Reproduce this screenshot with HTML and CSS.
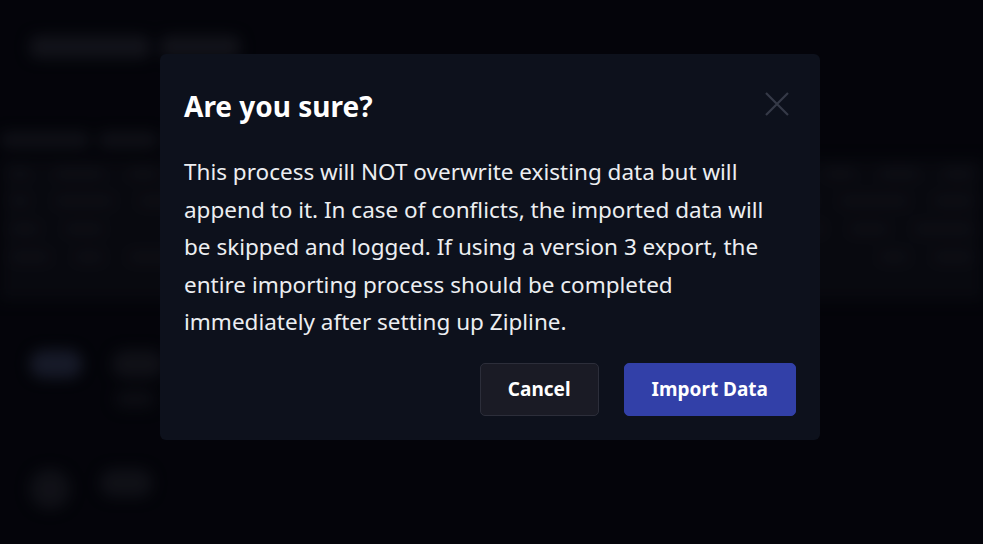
FILE: index.html
```html
<!DOCTYPE html>
<html lang="en">
<head>
<meta charset="utf-8">
<title>Import Data</title>
<link rel="stylesheet" href="styles.css">
</head>
<body>
<div class="page">
  <div class="bg">
    <div class="bg-title"><span class="blob w120"></span><span class="blob w80"></span></div>
    <div class="bg-sub"><span class="blob w90"></span><span class="blob w60"></span><span class="blob w120"></span></div>
    <div class="bg-table">
      <div class="bg-row"><span class="dot w20"></span><span class="dot w50"></span><span class="dot w30"></span><span class="spacer"></span><span class="dot w30"></span><span class="dot w40"></span><span class="dot w30"></span></div>
      <div class="bg-row"><span class="dot w20"></span><span class="dot w60"></span><span class="dot w40"></span><span class="spacer"></span><span class="dot w20"></span><span class="dot w70"></span><span class="dot w40"></span></div>
      <div class="bg-row"><span class="dot w30"></span><span class="dot w40"></span><span class="spacer"></span><span class="dot w20"></span><span class="dot w40"></span><span class="dot w60"></span></div>
      <div class="bg-row"><span class="dot w40"></span><span class="dot w30"></span><span class="dot w50"></span><span class="spacer"></span><span class="dot w30"></span><span class="dot w40"></span></div>
    </div>
    <div class="bg-pills"><span class="pill blue"></span><span class="pill"></span></div>
    <div class="bg-line"><span class="pill small"></span></div>
    <div class="bg-pills last"><span class="pill round"></span><span class="pill"></span></div>
  </div>
  <div class="overlay">
    <div class="modal" role="dialog">
      <div class="modal-header">
        <h2 class="modal-title">Are you sure?</h2>
        <button class="close" aria-label="Close">
          <svg width="26" height="26" viewBox="0 0 26 26"><path d="M2 2 L24 24 M24 2 L2 24" stroke="#353a47" stroke-width="2.2" fill="none"/></svg>
        </button>
      </div>
      <p class="modal-text">This process will NOT overwrite existing data but will append to it. In case of conflicts, the imported data will be skipped and logged. If using a version 3 export, the entire importing process should be completed immediately after setting up Zipline.</p>
      <div class="modal-actions">
        <button class="btn btn-cancel">Cancel</button>
        <button class="btn btn-primary">Import Data</button>
      </div>
    </div>
  </div>
</div>
</body>
</html>
```
FILE: styles.css
```css
* { box-sizing: border-box; }
html, body { margin: 0; padding: 0; }
body {
  width: 983px;
  height: 544px;
  overflow: hidden;
  background: #05060b;
  font-family: "Noto Sans", "Open Sans", sans-serif;
}
.page {
  position: relative;
  width: 983px;
  height: 544px;
}
.bg {
  filter: blur(7px);
  padding-top: 36px;
  display: flex;
  flex-direction: column;
}
.blob, .dot, .pill { display: inline-block; background: #1b1c24; border-radius: 8px; }
.bg-title { display: flex; gap: 10px; padding-left: 30px; height: 26px; }
.bg-title .blob { height: 22px; }
.bg-sub { display: flex; gap: 8px; margin-top: 70px; height: 20px; }
.bg-sub .blob { height: 16px; background: #17181f; }
.w20 { width: 20px; } .w30 { width: 30px; } .w40 { width: 40px; } .w50 { width: 50px; }
.w60 { width: 60px; } .w70 { width: 70px; } .w80 { width: 80px; } .w90 { width: 90px; } .w120 { width: 120px; }
.bg-table {
  margin-top: 8px;
  background: #0c0d13;
  padding: 8px 10px;
  display: flex;
  flex-direction: column;
  gap: 14px;
  height: 140px;
}
.bg-row { display: flex; gap: 24px; height: 14px; }
.bg-row .dot { height: 10px; background: #15161d; }
.spacer { flex: 1; }
.bg-pills { display: flex; gap: 30px; padding-left: 30px; margin-top: 50px; }
.pill { width: 52px; height: 28px; border-radius: 14px; background: #17181f; }
.pill.blue { background: #22273a; }
.bg-line { padding-left: 115px; margin-top: 12px; }
.pill.small { width: 40px; height: 18px; background: #111218; }
.bg-pills.last { margin-top: 56px; }
.pill.round { width: 40px; height: 40px; border-radius: 20px; }

.overlay {
  position: absolute;
  inset: 0;
  background: rgba(3, 4, 8, 0.35);
  display: flex;
  justify-content: flex-start;
  align-items: flex-start;
  padding-top: 54px;
  padding-left: 160px;
}
.modal {
  width: 660px;
  background: #0d111c;
  border-radius: 6px;
  padding: 24px;
  color: #f1f2f4;
}
.modal-header {
  display: flex;
  align-items: center;
  justify-content: space-between;
  height: 56px;
}
.modal-title {
  margin: 0;
  font-size: 28px;
  font-weight: 700;
  color: #ffffff;
}
.close {
  background: none;
  border: 0;
  padding: 0;
  width: 26px;
  height: 26px;
  margin-right: 6px;
  margin-top: -4px;
  cursor: pointer;
}
.close svg { display: block; }
.modal-text {
  margin: 19px 0 0 0;
  max-width: 592px;
  font-size: 22.5px;
  line-height: 37.5px;
  color: #eceef1;
}
.modal-actions {
  display: flex;
  justify-content: flex-end;
  gap: 25px;
  margin-top: 22px;
}
.btn {
  height: 53px;
  border-radius: 5px;
  font-family: inherit;
  font-size: 19px;
  font-weight: 700;
  color: #ffffff;
  padding: 0 27px;
  cursor: pointer;
}
.btn-cancel {
  background: #1a1b25;
  border: 1px solid #2c2e3a;
}
.btn-primary {
  background: #3240a8;
  border: 1px solid #3240a8;
}
```
